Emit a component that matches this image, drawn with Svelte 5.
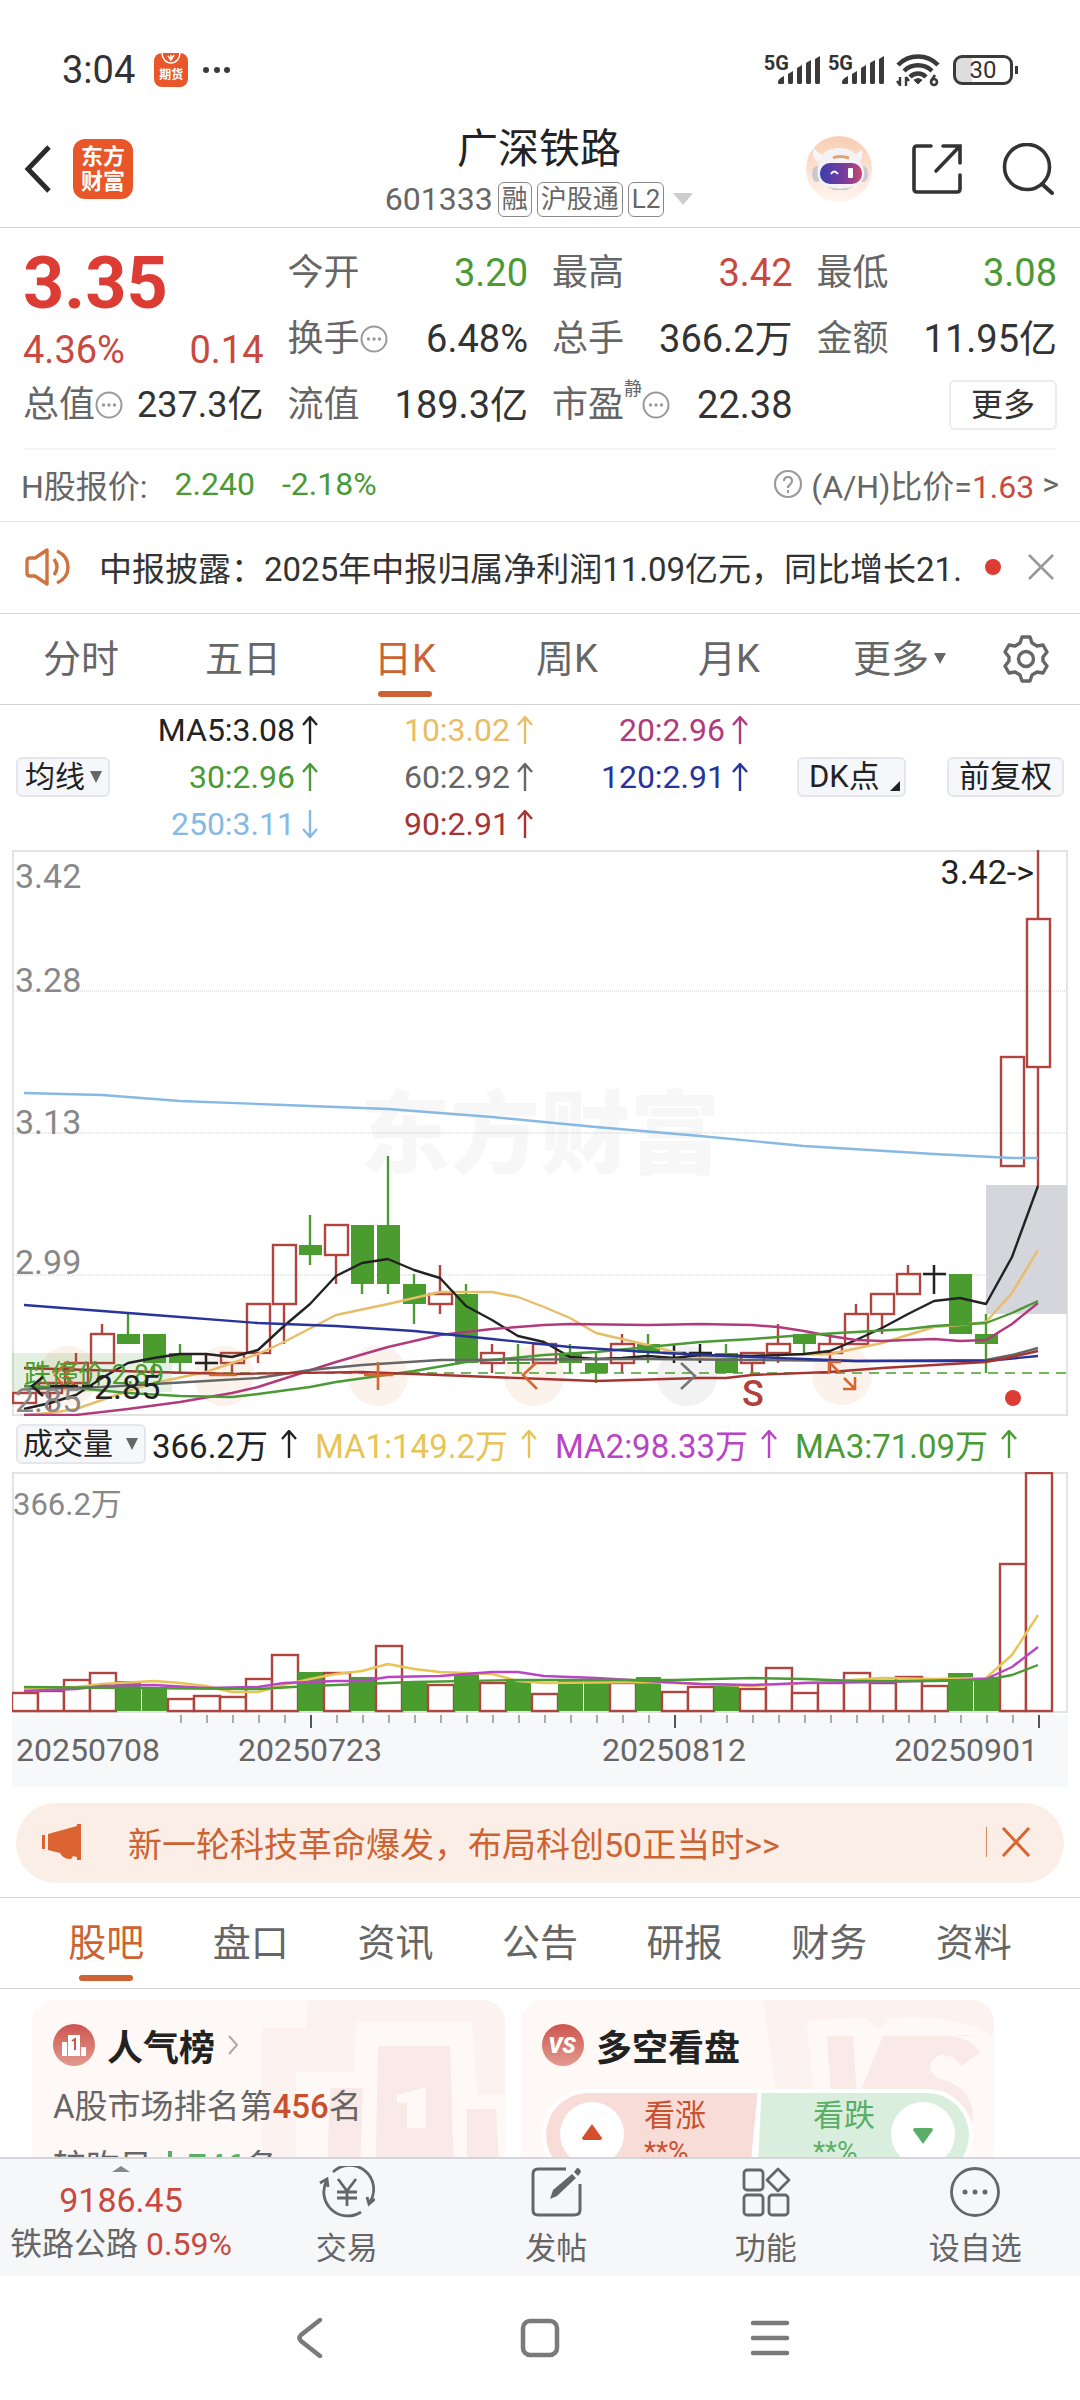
<script lang="ts">
  type Candle = [open: number, high: number, low: number, close: number];
  type Point = [index: number, y: number];

  const STEP = 26;
  const FIRST = 12;
  const TOP_PRICE = 3.42;
  const PX_PER_YUAN = 987;

  const x = (i: number) => FIRST + i * STEP;
  const y = (price: number) => Math.round((TOP_PRICE - price) * PX_PER_YUAN);
  const line = (points: Point[]) => points.map(([i, v]) => `${x(i)},${v}`).join(' ');

  const candles: Candle[] = [
    [2.86, 2.87, 2.86, 2.87], [2.87, 2.88, 2.85, 2.88], [2.88, 2.91, 2.88, 2.9], [2.9, 2.94, 2.9, 2.93],
    [2.93, 2.95, 2.92, 2.92], [2.93, 2.93, 2.89, 2.9], [2.91, 2.92, 2.89, 2.9], [2.9, 2.91, 2.89, 2.9],
    [2.9, 2.91, 2.89, 2.91], [2.91, 2.96, 2.9, 2.96], [2.96, 3.02, 2.92, 3.02], [3.02, 3.05, 3.0, 3.01],
    [3.01, 3.04, 2.98, 3.04], [3.04, 3.04, 2.97, 2.98], [3.04, 3.11, 2.97, 2.98], [2.98, 2.99, 2.94, 2.96],
    [2.96, 3.0, 2.95, 2.97], [2.97, 2.98, 2.9, 2.9], [2.9, 2.92, 2.89, 2.91], [2.901, 2.92, 2.89, 2.899],
    [2.9, 2.92, 2.9, 2.92], [2.91, 2.92, 2.89, 2.9], [2.9, 2.91, 2.88, 2.89], [2.9, 2.93, 2.89, 2.92],
    [2.92, 2.93, 2.9, 2.91], [2.91, 2.92, 2.9, 2.91], [2.91, 2.92, 2.9, 2.91], [2.91, 2.92, 2.89, 2.89],
    [2.9, 2.91, 2.89, 2.91], [2.91, 2.94, 2.9, 2.92], [2.93, 2.93, 2.91, 2.92], [2.91, 2.93, 2.89, 2.92],
    [2.92, 2.96, 2.92, 2.95], [2.95, 2.97, 2.93, 2.97], [2.97, 3.0, 2.97, 2.99], [2.99, 3.0, 2.97, 2.99],
    [2.99, 2.99, 2.93, 2.93], [2.93, 2.95, 2.89, 2.92], [3.1, 3.21, 3.1, 3.21], [3.2, 3.42, 3.08, 3.35],
  ];

  const averages: { color: string; points: Point[] }[] = [
    { color: '#86b9e4', points: [[0, 243], [3, 245], [6, 251], [10, 255], [14, 259], [18, 267], [20, 272], [22, 277], [26, 286], [30, 296], [35, 304], [38, 308], [39, 308]] },
    { color: '#e8bd68', points: [[0, 565], [1, 563], [2, 559], [3, 550], [4, 541], [5, 533], [7, 522], [9, 504], [10, 492], [12, 465], [14, 454], [16, 442], [18, 442], [19, 447], [20, 457], [21, 468], [22, 483], [23, 489], [24, 495], [25, 502], [26, 508], [27, 507], [29, 505], [31, 504], [33, 493], [35, 477], [36, 475], [37, 472], [38, 443], [39, 400]] },
    { color: '#222222', points: [[0, 559], [1, 553], [2, 545], [3, 528], [4, 513], [5, 508], [6, 504], [7, 504], [8, 507], [9, 500], [10, 476], [11, 454], [12, 426], [13, 413], [14, 409], [15, 420], [16, 428], [17, 456], [18, 470], [19, 486], [20, 492], [21, 507], [22, 509], [23, 508], [24, 506], [25, 508], [26, 505], [28, 506], [29, 505], [30, 504], [31, 501], [32, 490], [33, 478], [34, 464], [35, 451], [36, 448], [37, 454], [38, 407], [39, 336]] },
    { color: '#b13a7c', points: [[0, 565], [2, 565], [4, 559], [6, 552], [8, 543], [9, 537], [12, 512], [14, 497], [16, 485], [18, 479], [20, 475], [21, 474], [24, 475], [26, 474], [28, 475], [29, 477], [30, 481], [31, 486], [32, 490], [33, 491], [35, 489], [36, 491], [37, 490], [38, 474], [39, 453]] },
    { color: '#4a9a35', points: [[0, 536], [2, 538], [4, 543], [6, 546], [8, 547], [9, 544], [11, 537], [12, 532], [15, 521], [17, 512], [18, 510], [20, 505], [22, 502], [24, 497], [26, 492], [28, 489], [30, 485], [32, 482], [34, 479], [35, 476], [37, 473], [38, 463], [39, 451]] },
    { color: '#666666', points: [[0, 539], [3, 537], [7, 531], [9, 528], [11, 520], [13, 515], [16, 510], [24, 509], [28, 510], [32, 511], [37, 510], [38, 505], [39, 498]] },
    { color: '#28349b', points: [[0, 455], [2, 459], [5, 465], [9, 473], [12, 476], [15, 481], [18, 489], [21, 497], [24, 502], [27, 506], [30, 509], [32, 511], [37, 511], [39, 506]] },
    { color: '#a53433', points: [[0, 518], [5, 522], [8, 524], [13, 522], [16, 525], [20, 529], [22, 531], [26, 528], [27, 528], [28, 525], [31, 522], [33, 518], [35, 515], [37, 512], [38, 507], [39, 501]] },
  ];

  // negative numbers are falling days
  const volumes = [
    18, 20, 31, 38, -30, -24, 12, 15, 14, 32, 56, -39, 38, -34, 65, -29, 26, -37, 28, -32,
    17, -30, -30, 28, -34, 19, 24, -25, 22, 43, 18, 28, 38, 28, 34, 25, -38, -34, 147, 238,
  ];

  const volumeAverages: { color: string; points: Point[] }[] = [
    { color: '#e8c455', points: [[0, 217], [2, 215], [3, 212], [5, 209], [6, 211], [7, 214], [8, 220], [9, 220], [10, 213], [11, 207], [12, 202], [13, 199], [14, 192], [15, 197], [16, 200], [18, 202], [19, 209], [20, 211], [24, 210], [26, 212], [28, 214], [30, 211], [33, 206], [35, 207], [37, 206], [38, 183], [39, 143]] },
    { color: '#b944c6', points: [[0, 219], [2, 217], [3, 214], [5, 213], [7, 216], [9, 215], [10, 211], [12, 209], [13, 209], [14, 205], [16, 204], [17, 202], [18, 200], [19, 200], [20, 204], [22, 206], [24, 209], [26, 212], [28, 213], [30, 211], [33, 210], [36, 208], [37, 207], [38, 195], [39, 175]] },
    { color: '#4a9a35', points: [[0, 215], [4, 216], [9, 217], [11, 214], [13, 212], [15, 210], [19, 208], [25, 208], [28, 206], [30, 207], [32, 209], [35, 209], [37, 208], [38, 203], [39, 193]] },
  ];

  const gridLines = [141, 283, 425];
  const priceLabels = [
    { text: '3.42', y: 38 },
    { text: '3.28', y: 142 },
    { text: '3.13', y: 284 },
    { text: '2.99', y: 424 },
    { text: '2.85', y: 562 },
  ];
  const ticks = Array.from({ length: 34 }, (_, i) => i + 6);
  const majorTicks = [11, 25, 39];

  const quoteColumns = [
    [
      { label: '今开', value: '3.20', tone: 'down' },
      { label: '换手', value: '6.48%', info: true },
      { label: '流值', value: '189.3亿' },
    ],
    [
      { label: '最高', value: '3.42', tone: 'up' },
      { label: '总手', value: '366.2万' },
      { label: '市盈', sup: '静', value: '22.38', info: true },
    ],
    [
      { label: '最低', value: '3.08', tone: 'down' },
      { label: '金额', value: '11.95亿' },
    ],
  ];

  const maLegend = [
    { text: 'MA5:3.08', color: '#222222' },
    { text: '10:3.02', color: '#e8bd68' },
    { text: '20:2.96', color: '#b13a7c' },
    { text: '30:2.96', color: '#4a9a35' },
    { text: '60:2.92', color: '#666666' },
    { text: '120:2.91', color: '#28349b' },
    { text: '250:3.11', color: '#86b9e4', falling: true },
    { text: '90:2.91', color: '#a53433' },
  ];

  const volumeLegend = [
    { text: '366.2万', color: '#222222' },
    { text: 'MA1:149.2万', color: '#e8c455' },
    { text: 'MA2:98.33万', color: '#b944c6' },
    { text: 'MA3:71.09万', color: '#4a9a35' },
  ];

  const periods = ['分时', '五日', '日K', '周K', '月K', '更多'];
  const sections = ['股吧', '盘口', '资讯', '公告', '研报', '财务', '资料'];
  let period = $state('日K');
  let section = $state('股吧');
</script>

{#snippet arrow(falling = false)}
  <svg class="arrow" class:falling viewBox="0 0 16 28" aria-hidden="true">
    <path d="M8 28V2M1 9L8 1L15 9" fill="none" stroke="currentColor" stroke-width="2.4" />
  </svg>
{/snippet}

{#snippet info()}
  <svg class="info" viewBox="0 0 28 28" aria-hidden="true">
    <circle cx="14" cy="14" r="12.5" fill="none" stroke="#999" stroke-width="2" />
    <circle cx="8.5" cy="14" r="1.7" fill="#999" /><circle cx="14" cy="14" r="1.7" fill="#999" /><circle cx="19.5" cy="14" r="1.7" fill="#999" />
  </svg>
{/snippet}

{#snippet signal()}
  <span class="signal">
    <span>5G</span>
    <svg width="43" height="28" viewBox="0 0 43 28" aria-hidden="true">
      <path d="M0 26q0-3 6-6v7q0 1-1 1H1q-1 0-1-1zM10 18l5-3v12l-1 1h-3l-1-1zM19 12l5-3v18l-1 1h-3l-1-1zM28 7l5-3v23l-1 1h-3l-1-1zM37 3l5-3v27l-1 1h-3l-1-1z" />
    </svg>
  </span>
{/snippet}

<div class="app">
  <div class="status">
    <span class="clock">3:04</span>
    <span class="mini-logo"><svg width="20" height="12" viewBox="0 0 20 12"><path d="M1 0a9 10 0 0 0 18 0M7 3l3 4 3-5M10 7V2" fill="none" stroke="#fff" stroke-width="1.5" /></svg>期货</span>
    <svg width="28" height="8" viewBox="0 0 28 8"><circle cx="4" cy="4" r="3" /><circle cx="15" cy="4" r="3" /><circle cx="25" cy="4" r="3" /></svg>
    <span class="spacer"></span>
    {@render signal()}
    {@render signal()}
    <svg class="wifi" width="44" height="34" viewBox="0 0 44 34">
      <g fill="none" stroke="#3a3a3a" stroke-width="4.5">
        <path d="M2 12a28 28 0 0 1 40 0" /><path d="M8 18a20 20 0 0 1 28 0" /><path d="M14 24a11 11 0 0 1 16 0" />
        <path d="M22 31l-4-4q4-3 8 0z" fill="#3a3a3a" stroke-width="1" />
        <path d="M4 33V24M10 24v9M1 28l3 4M13 28l-3-4" stroke-width="2.4" />
        <path d="M39 22l-4 6" stroke-width="2.6" /><circle cx="38" cy="29" r="3" stroke-width="2.6" />
      </g>
    </svg>
    <span class="battery">30</span>
  </div>

  <header>
    <div class="side">
      <button class="plain" aria-label="返回">
        <svg width="28" height="48" viewBox="0 0 28 48"><path d="M25 2L4 24L25 46" fill="none" stroke="#2b2b2b" stroke-width="5" /></svg>
      </button>
      <a class="logo" href="#home">东方<br />财富</a>
    </div>
    <div class="title">
      <h1>广深铁路</h1>
      <div class="code">601333 <span>融</span><span>沪股通</span><span>L2</span><i class="caret"></i></div>
    </div>
    <div class="side tools">
      <button class="plain" aria-label="智能助手">
        <svg width="66" height="66" viewBox="0 0 66 66">
          <defs>
            <linearGradient id="halo" x2="0" y2="1"><stop stop-color="#f8cdb2" /><stop offset="1" stop-color="#fff5f0" /></linearGradient>
            <linearGradient id="visor"><stop stop-color="#3c3fae" /><stop offset="0.6" stop-color="#7a3c9c" /><stop offset="1" stop-color="#c8486f" /></linearGradient>
          </defs>
          <circle cx="33" cy="33" r="33" fill="url(#halo)" />
          <path d="M8 12q-4 9 4 14l8-6q-8-2-12-8zM55 13q4 8-3 14l-9-5q9-3 12-9z" fill="#f8f5f7" />
          <ellipse cx="11" cy="38" rx="5" ry="8" fill="#c9c7d2" /><ellipse cx="57" cy="38" rx="5" ry="8" fill="#c9c7d2" />
          <path d="M13 27Q16 12 33 12T55 27Q62 38 54 48Q46 54 34 54T15 48Q9 38 13 27z" fill="#f4f2f6" />
          <path d="M20 50q14 6 28 0l-8 4h-12z" fill="#c4c2cc" />
          <rect x="14" y="27" width="42" height="21" rx="10" fill="url(#visor)" />
          <path d="M25 38q3-5 7 0" fill="none" stroke="#fff" stroke-width="2" />
          <rect x="42" y="32" width="5" height="10" rx="1" fill="#fff" />
          <path d="M27 22q6-3 16 0" fill="none" stroke="#dda36d" stroke-width="3" />
        </svg>
      </button>
      <button class="plain" aria-label="分享">
        <svg width="50" height="50" viewBox="0 0 50 50"><path d="M19 2H5Q2 2 2 5V45Q2 48 5 48H45Q48 48 48 45V31M31 2H48V19M47 3L24 27" fill="none" stroke="#333" stroke-width="3.6" stroke-linecap="round" /></svg>
      </button>
      <button class="plain" aria-label="搜索">
        <svg width="52" height="52" viewBox="0 0 52 52"><circle cx="25" cy="24" r="22.5" fill="none" stroke="#333" stroke-width="3.6" /><path d="M40 41L50 50" stroke="#333" stroke-width="4" stroke-linecap="round" /></svg>
      </button>
    </div>
  </header>

  <section class="quote">
    <div>
      <div class="price up">3.35</div>
      <div class="change up"><span>4.36%</span><span>0.14</span></div>
      <div class="cell total"><span class="label">总值</span>{@render info()}<b>237.3亿</b></div>
    </div>
    {#each quoteColumns as column, i}
      <div>
        {#each column as cell}
          <div class="cell">
            <span class="label">{cell.label}</span>
            {#if cell.sup}<sup>{cell.sup}</sup>{/if}
            {#if cell.info}{@render info()}{/if}
            <b class={cell.tone}>{cell.value}</b>
          </div>
        {/each}
        {#if i === 2}
          <div class="cell end"><button class="more">更多</button></div>
        {/if}
      </div>
    {/each}
  </section>

  <a class="h-share" href="#h-share">
    <span>H股报价:</span>
    <span class="down">2.240</span>
    <span class="down">-2.18%</span>
    <span class="spacer"></span>
    <svg width="30" height="30" viewBox="0 0 30 30"><circle cx="15" cy="15" r="13" fill="none" stroke="#999" stroke-width="2.2" /><path d="M11 12q0-4 4-4t4 4q0 2-2 3.500t-2 3.500M15 21v3" fill="none" stroke="#999" stroke-width="2.2" /></svg>
    <span class="ratio">(A/H)比价=<em class="up">1.63</em></span>
    <span>&gt;</span>
  </a>

  <div class="news">
    <svg width="46" height="40" viewBox="0 0 46 40"><g fill="none" stroke="#cf7440" stroke-width="3.4" stroke-linejoin="round"><path d="M22 3L10 11H5q-3 0-3 3V26q0 3 3 3h5L22 37z" /><path d="M29 12q6 8 0 16M32 4q11 5 11 16T32 36" /></g></svg>
    <a href="#news">中报披露：2025年中报归属净利润11.09亿元，同比增长21.</a>
    <i class="dot"></i>
    <button class="plain" aria-label="关闭公告">
      <svg width="26" height="26" viewBox="0 0 26 26"><path d="M1 1L25 25M25 1L1 25" stroke="#999" stroke-width="2.6" /></svg>
    </button>
  </div>

  <nav class="periods">
    {#each periods as name}
      <button class:active={period === name} onclick={() => (period = name)}>{name}{#if name === '更多'}<i class="tab-caret"></i>{/if}</button>
    {/each}
    <button class="gear" aria-label="图表设置">
      <svg width="46" height="48" viewBox="0 0 46 48"><path d="M19 2h8l2 6 5 3 6-1 4 7-4 5v4l4 5-4 7-6-1-5 3-2 6h-8l-2-6-5-3-6 1-4-7 4-5v-4l-4-5 4-7 6 1 5-3z" fill="none" stroke="#666" stroke-width="3.4" stroke-linejoin="round" /><circle cx="23" cy="24" r="7.500" fill="none" stroke="#666" stroke-width="3.4" /></svg>
    </button>
  </nav>

  <div class="indicators">
    <label class="pick">
      <select aria-label="主图指标"><option>均线</option></select><i></i>
    </label>
    <div class="ma-legend">
      {#each maLegend as item}
        <span style="color: {item.color}">{item.text}{@render arrow(item.falling)}</span>
      {/each}
    </div>
    <button class="chip dk">DK点</button>
    <button class="chip">前复权</button>
  </div>

  <div class="chart">
    <svg viewBox="0 0 1056 566" role="img" aria-label="日K线">
      <text x="528" y="316" text-anchor="middle" class="watermark">东方财富</text>
      {#each gridLines as gy}
        <line x1="0" x2="1056" y1={gy} y2={gy} stroke="#ccc" stroke-dasharray="1 1" />
      {/each}
      <rect x="1" y="1" width="1054" height="564" fill="none" stroke="#e3e3e3" stroke-width="2" />
      <g fill="#fcf2ec">
        <circle cx="56" cy="526" r="30" /><circle cx="212" cy="526" r="30" /><circle cx="366" cy="526" r="30" />
        <circle cx="522" cy="526" r="30" /><circle cx="675" cy="526" r="30" fill="#f2f2f2" /><circle cx="830" cy="525" r="30" />
      </g>
      <rect x="0" y="503" width="160" height="39" fill="#4a9a35" opacity="0.15" />
      <rect x="974" y="335" width="81" height="129" fill="#d5d6dc" />

      {#each candles as [open, high, low, close], i}
        {#if close > open}
          <g fill="none" stroke="#b04540" stroke-width="2.4">
            <path d="M{x(i)} {y(high)}V{y(close)}M{x(i)} {y(open)}V{y(low)}" />
            <rect x={x(i) - 11} y={y(close)} width="23" height={y(open) - y(close)} />
          </g>
        {:else if close < open}
          <path d="M{x(i)} {y(high)}V{y(low)}" stroke="#4a9c2e" stroke-width="2.4" />
          <rect x={x(i) - 11} y={y(open)} width="23" height={y(close) - y(open)} fill="#4a9c2e" />
        {:else}
          <path d="M{x(i)} {y(high)}V{y(low)}M{x(i) - 11} {y(close)}h23" stroke="#222" stroke-width="2.5" />
        {/if}
      {/each}

      <line x1="160" x2="1056" y1="523" y2="523" stroke="#4a9c2e" stroke-width="1.4" stroke-dasharray="10 7" />
      {#each averages as average}
        <polyline points={line(average.points)} fill="none" stroke={average.color} stroke-width="2.4" stroke-linejoin="round" />
      {/each}

      <g fill="none" stroke="#d9662f" stroke-width="2.6">
        <path d="M54 512L43 525L54 539M65 512L54 525L65 539" />
        <path d="M197 525h28M352 525h29M366 512v28" />
        <path d="M525 512L511 525L525 539" />
        <path d="M817 524V512H829M817 512L828 523M843 527V539H831M843 539L832 528" />
        <path d="M669 513L683 526L669 539" stroke="#777" />
      </g>

      {#each priceLabels as label}
        <text x="3" y={label.y} class="price-label">{label.text}</text>
      {/each}
      <text x="12" y="534" class="limit">跌停价:2.89</text>
      <path d="M31 527L20 536L31 546M38 536h28M70 536h11" fill="none" stroke="#222" stroke-width="2.6" />
      <text x="82" y="549" class="mark">2.85</text>
      <text x="1022" y="34" text-anchor="end" class="mark">3.42-&gt;</text>
      <text x="730" y="556" class="sell">S</text>
      <circle cx="1001" cy="548" r="8" fill="#dc3c33" />
    </svg>

    <div class="volume-legend">
      <label class="pick wide">
        <select aria-label="副图指标"><option>成交量</option></select><i></i>
      </label>
      {#each volumeLegend as item}
        <span style="color: {item.color}">{item.text}{@render arrow()}</span>
      {/each}
    </div>

    <svg viewBox="0 0 1056 241" role="img" aria-label="成交量">
      <rect x="1" y="1" width="1054" height="239" fill="none" stroke="#e3e3e3" stroke-width="2" />
      <text x="1" y="43" class="volume-label">366.2万</text>
      {#each volumes as v, i}
        {#if v > 0}
          <rect x={x(i) - 12} y={239 - v} width="26" height={v} fill="#fff" stroke="#b04540" stroke-width="2.4" />
        {:else}
          <rect x={x(i) - 12} y={239 + v} width="25" height={-v} fill="#4a9c2e" />
        {/if}
      {/each}
      {#each volumeAverages as average}
        <polyline points={line(average.points)} fill="none" stroke={average.color} stroke-width="2.4" stroke-linejoin="round" />
      {/each}
    </svg>

    <svg class="axis" viewBox="0 0 1056 72" aria-label="日期">
      {#each ticks as i}
        <line x1={x(i) + 1} x2={x(i) + 1} y1="0" y2={majorTicks.includes(i) ? 13 : 8} stroke={majorTicks.includes(i) ? '#555' : '#aaa'} stroke-width="2" />
      {/each}
      <text x="4" y="46">20250708</text>
      <text x={x(11)} y="46" text-anchor="middle">20250723</text>
      <text x={x(25)} y="46" text-anchor="middle">20250812</text>
      <text x={x(39)} y="46" text-anchor="end">20250901</text>
    </svg>
  </div>

  <div class="banner">
    <svg width="42" height="36" viewBox="0 0 42 36"><path d="M1 11h3v14H1zM7 10L36 2V0h4V36h-4v-3L32 32l-2 3q-8 0-11-6L7 26z" fill="#db6430" /></svg>
    <a href="#promo">新一轮科技革命爆发，布局科创50正当时&gt;&gt;</a>
    <button class="plain" aria-label="关闭广告">
      <svg width="30" height="30" viewBox="0 0 30 30"><path d="M2 1L28 29M28 1L2 29" stroke="#d9662f" stroke-width="3" /></svg>
    </button>
  </div>

  <nav class="sections">
    {#each sections as name}
      <button class:active={section === name} onclick={() => (section = name)}>{name}</button>
    {/each}
  </nav>

  <main class="feed">
    <article>
      <svg class="backdrop" viewBox="0 0 243 200" aria-hidden="true">
        <path d="M46 0H243V200H0V28H44z" fill="#fcf3f1" />
        <path d="M94 22H210L215 95H243V200H34V72H92z" fill="#fef9f7" />
        <path d="M116 46h72l5 154h-80zM68 88h33l-4 112H64zM205 109h29l5 91h-34z" fill="#f9eae8" />
        <path d="M164 87v41h-19v-26l-10 1v-8z" fill="#fef9f7" />
      </svg>
      <h2>
        <svg width="42" height="42" viewBox="0 0 42 42">
          <defs><linearGradient id="badge" x2="0" y2="1"><stop stop-color="#cc554e" /><stop offset="1" stop-color="#e39a90" /></linearGradient></defs>
          <circle cx="21" cy="21" r="21" fill="url(#badge)" /><path d="M9 18h5v14H9zM15 11h12v21H15zM28 23h5v9h-5z" fill="#fff" /><path d="M19 17l3-2v11" fill="none" stroke="#cc554e" stroke-width="2" />
        </svg>
        人气榜
        <svg width="12" height="20" viewBox="0 0 12 20"><path d="M2 1L10 10L2 19" fill="none" stroke="#aaa" stroke-width="2" /></svg>
      </h2>
      <p>A股市场排名第<strong class="rank">456</strong>名</p>
      <p>较昨日<strong class="drop"><svg viewBox="0 0 16 28" aria-hidden="true"><path d="M8 1V26M2 18L8 26L14 18" fill="none" stroke="currentColor" stroke-width="4" /></svg>746 </strong>名</p>
    </article>
    <article>
      <svg class="backdrop" viewBox="0 0 243 200" aria-hidden="true">
        <path d="M12 0H243V200H40z" fill="#fcf3f1" />
        <path d="M56 20L115 18L127 30L140 18Q215 14 243 38V200H72z" fill="#fef9f7" />
        <path d="M76 36h26l4 64 26-64h94q-46-6-51 28-3 26 24 34l-32 50H84z" fill="#f9eae8" />
        <path d="M170 44q14-10 30-8 18 2 29 16l-18 14q-12-14-24-10-16 10 0 22 40 10 34 48l-54-6-16-40z" fill="#f9eae8" />
      </svg>
      <h2>
        <svg width="42" height="42" viewBox="0 0 42 42"><circle cx="21" cy="21" r="21" fill="url(#badge)" /><text x="20" y="29" text-anchor="middle" class="vs">VS</text></svg>
        多空看盘
      </h2>
      <div class="vote">
        <button class="bull"><svg width="64" height="64" viewBox="0 0 64 64"><circle cx="32" cy="32" r="32" fill="#fff" /><path d="M32 22L42 36Q42 38 40 38H24Q22 38 22 36z" fill="#d5502a" /></svg><span>看涨<small>**%</small></span></button>
        <button class="bear"><span>看跌<small>**%</small></span><svg width="64" height="64" viewBox="0 0 64 64"><circle cx="32" cy="32" r="32" fill="#fff" /><path d="M32 42L22 28Q22 26 24 26H40Q42 26 42 28z" fill="#5bae68" /></svg></button>
      </div>
    </article>
  </main>

  <footer>
    <a class="index" href="#index">
      <i></i>
      <span class="up">9186.45</span>
      <span>铁路公路 <em class="up">0.59%</em></span>
    </a>
    <a href="#trade">
      <svg viewBox="0 0 56 52"><g fill="none" stroke="#666" stroke-width="2.8"><path d="M14 6A24 24 0 0 1 51 36M42 46A24 24 0 0 1 8 14M1 17l7-4 1 8M56 33l-6 5-2-7" /><path d="M19 13l9 12 9-12M18 26h20M18 32h20M28 25v15" /></g></svg>
      交易
    </a>
    <a href="#post">
      <svg viewBox="0 0 56 52"><path d="M38 3H10q-5 0-5 5V44q0 5 5 5H46q6 0 6-5V18" fill="none" stroke="#666" stroke-width="3" /><path d="M22 33l3-9L44 8l4 4L29 30zM46 6l3-4q3 0 4 4l-3 4z" fill="#666" /></svg>
      发帖
    </a>
    <a href="#features">
      <svg viewBox="0 0 56 52"><g fill="none" stroke="#666" stroke-width="2.8"><rect x="6" y="4" width="19" height="20" rx="3" /><rect x="6" y="29" width="19" height="20" rx="3" /><rect x="31" y="29" width="19" height="20" rx="3" /><path d="M40 3L51 14L40 25L29 14z" stroke-linejoin="round" /></g></svg>
      功能
    </a>
    <a href="#watch">
      <svg viewBox="0 0 56 52"><circle cx="28" cy="26" r="23.500" fill="none" stroke="#666" stroke-width="2.8" /><circle cx="18" cy="26" r="2.500" fill="#666" /><circle cx="28" cy="26" r="2.500" fill="#666" /><circle cx="38" cy="26" r="2.500" fill="#666" /></svg>
      设自选
    </a>
  </footer>

  <div class="system-nav">
    <button class="plain" aria-label="后退"><svg width="40" height="40" viewBox="0 0 40 40"><path d="M30 2L11 17Q8 20 11 23L30 38" fill="none" stroke="#7a7a7a" stroke-width="4.500" stroke-linecap="round" /></svg></button>
    <button class="plain" aria-label="主屏幕"><svg width="40" height="40" viewBox="0 0 40 40"><rect x="3" y="3" width="34" height="34" rx="7" fill="none" stroke="#7a7a7a" stroke-width="4.500" /></svg></button>
    <button class="plain" aria-label="最近任务"><svg width="40" height="40" viewBox="0 0 40 40"><path d="M3 5H37M3 20H37M3 35H37" stroke="#7a7a7a" stroke-width="4.500" stroke-linecap="round" /></svg></button>
  </div>
</div>

<style>
  :global(body) {
    margin: 0;
    background: #fff;
  }

  .app {
    --up: #c94840;
    --down: #4a9a35;
    --accent: #cd6332;
    display: flex;
    flex-direction: column;
    height: 100vh;
    font-family: Roboto, "Noto Sans CJK SC", sans-serif;
    font-size: 32px;
    color: #666;
    overflow: hidden;
  }

  .app > * {
    flex: none;
  }

  .app :global(*) {
    box-sizing: border-box;
  }

  svg {
    display: block;
    flex: none;
  }

  button,
  select {
    font: inherit;
    color: inherit;
    border: 0;
    padding: 0;
    background: none;
    cursor: pointer;
  }

  a {
    color: inherit;
    text-decoration: none;
  }

  em {
    font-style: normal;
  }

  .plain {
    display: flex;
  }

  .spacer {
    flex: 1;
  }

  .up {
    color: var(--up);
  }

  .down {
    color: var(--down);
  }

  /* status bar */
  .status {
    display: flex;
    align-items: center;
    height: 120px;
    padding: 20px 67px 0 62px;
    color: #333;
    fill: #3a3a3a;
  }

  .clock {
    font-size: 38px;
    margin-right: 19px;
  }

  .mini-logo {
    display: flex;
    flex-direction: column;
    align-items: center;
    width: 34px;
    height: 34px;
    margin-right: 14px;
    border-radius: 8px;
    background: #e8562a;
    color: #fff;
    font-size: 12px;
    line-height: 20px;
    font-weight: 700;
  }

  .signal {
    display: flex;
    align-items: flex-end;
    margin-right: 7px;
  }

  .signal span {
    align-self: flex-start;
    margin-right: -11px;
    font-size: 20px;
    font-weight: 700;
    line-height: 14px;
  }

  .wifi {
    margin: 0 13px 0 4px;
  }

  .battery {
    position: relative;
    width: 60px;
    height: 30px;
    border: 3px solid #3a3a3a;
    border-radius: 9px;
    background: linear-gradient(90deg, #ddd 30%, #fff 30%);
    font-size: 24px;
    line-height: 24px;
    text-align: center;
  }

  .battery::after {
    content: "";
    position: absolute;
    right: -8px;
    top: 8px;
    width: 3px;
    height: 8px;
    background: #3a3a3a;
  }

  /* header */
  header {
    display: grid;
    grid-template-columns: 1fr auto 1fr;
    padding: 4px 26px 3px 24px;
    border-bottom: 1px solid #d4d4d4;
  }

  .side {
    display: flex;
    align-items: center;
    gap: 21px;
    height: 90px;
  }

  .tools {
    justify-content: flex-end;
    gap: 40px;
  }

  .logo {
    width: 60px;
    height: 60px;
    padding-top: 5px;
    border-radius: 12px;
    background: #e8562a;
    color: #fff;
    font-size: 22px;
    font-weight: 700;
    line-height: 25px;
    text-align: center;
  }

  .title {
    text-align: center;
  }

  h1 {
    margin: 0;
    font-size: 41px;
    font-weight: 400;
    line-height: 50px;
    color: #222;
  }

  .code {
    display: flex;
    align-items: center;
    gap: 5px;
    height: 50px;
  }

  .code span {
    height: 35px;
    padding: 0 3px;
    border: 1px solid #888;
    border-radius: 6px;
    font-size: 26px;
    line-height: 32px;
  }

  .caret {
    margin-left: 4px;
    border: 10px solid transparent;
    border-top: 12px solid #ccc;
    border-bottom: 0;
  }

  /* quote */
  .quote {
    display: grid;
    grid-template-columns: repeat(4, 1fr);
    gap: 24px;
    margin: 0 23px;
    padding: 12px 0 10px;
    border-bottom: 2px solid #f5f5f5;
    font-size: 36px;
  }

  .price {
    font-size: 72px;
    font-weight: 700;
    line-height: 88px;
    color: #dc3c33;
  }

  .change {
    display: flex;
    justify-content: space-between;
    font-size: 38px;
    line-height: 44px;
  }

  .cell {
    display: flex;
    align-items: center;
    height: 66px;
    line-height: 66px;
    white-space: nowrap;
  }

  .cell b {
    margin-left: auto;
    font-size: 38px;
    font-weight: 400;
  }

  .total b {
    font-size: 36px;
  }

  .cell b:not(.up):not(.down) {
    color: #333;
  }

  .cell sup {
    align-self: flex-start;
    font-size: 18px;
    line-height: 34px;
  }

  .info {
    width: 28px;
    height: 28px;
  }

  .end {
    justify-content: flex-end;
  }

  .more {
    width: 108px;
    height: 50px;
    border: 2px solid #ececec;
    border-radius: 6px;
    font-size: 32px;
    line-height: 44px;
    color: #333;
  }

  .h-share {
    display: flex;
    align-items: center;
    height: 72px;
    padding: 0 21px 4px;
    border-bottom: 1px solid #e8e8e8;
  }

  .h-share .down {
    margin-left: 27px;
  }

  .ratio {
    margin: 0 8px;
  }

  .news {
    display: flex;
    align-items: center;
    height: 92px;
    padding: 0 26px 2px 25px;
    border-bottom: 1px solid #d8d8d8;
    font-size: 33px;
    color: #333;
  }

  .news a {
    flex: 1;
    margin-left: 28px;
    overflow: hidden;
    white-space: nowrap;
  }

  .dot {
    width: 16px;
    height: 16px;
    margin: 0 27px 0 8px;
    border-radius: 50%;
    background: #dc3c33;
  }

  /* tabs */
  .periods,
  .sections {
    display: flex;
    height: 91px;
    border-bottom: 1px solid #d4d4d4;
    font-size: 38px;
  }

  .periods button,
  .sections button {
    position: relative;
    flex: 3;
    line-height: 90px;
  }

  .periods .gear {
    display: flex;
    flex: 2;
    align-items: center;
    justify-content: center;
  }

  button.active {
    color: var(--accent);
  }

  button.active::after {
    content: "";
    position: absolute;
    left: 50%;
    bottom: 7px;
    width: 54px;
    height: 6px;
    border-radius: 3px;
    background: var(--accent);
    transform: translateX(-50%);
  }

  .tab-caret {
    position: absolute;
    top: 39px;
    margin-left: 5px;
    border: 6px solid transparent;
    border-top: 11px solid #666;
    border-bottom: 0;
  }

  /* indicators */
  .indicators {
    display: flex;
    align-items: center;
    padding: 1px 16px 3px;
  }

  .pick {
    position: relative;
    display: flex;
  }

  .pick select {
    width: 94px;
    height: 40px;
    padding-left: 7px;
    border: 2px solid #e4e6ec;
    border-radius: 6px;
    background: #f6f7fa;
    appearance: none;
    font-size: 30px;
    line-height: 36px;
    color: #222;
  }

  .pick i {
    position: absolute;
    right: 8px;
    top: 14px;
    border: 6px solid transparent;
    border-top: 12px solid #666;
    border-bottom: 0;
    pointer-events: none;
  }

  .pick.wide select {
    width: 130px;
    padding-left: 5px;
  }

  .ma-legend {
    display: grid;
    grid-template-columns: 208px 215px 215px;
    grid-auto-rows: 47px;
  }

  .ma-legend span {
    display: flex;
    align-items: center;
    justify-content: flex-end;
    gap: 7px;
  }

  .arrow {
    width: 16px;
    height: 28px;
  }

  .falling {
    transform: rotate(180deg);
  }

  .chip {
    position: relative;
    height: 40px;
    margin-left: auto;
    padding: 0 10px;
    border: 2px solid #e4e6ec;
    border-radius: 6px;
    background: #f6f7fa;
    font-size: 31px;
    line-height: 34px;
    color: #222;
  }

  .dk {
    margin-left: 49px;
    padding-right: 24px;
  }

  .dk::after {
    content: "";
    position: absolute;
    right: 4px;
    bottom: 4px;
    border-left: 10px solid transparent;
    border-bottom: 10px solid #222;
  }

  /* charts */
  .chart {
    margin: 0 12px;
  }

  .chart > svg {
    width: 100%;
    height: auto;
  }

  .watermark {
    font-size: 90px;
    font-weight: 900;
    fill: #f7f7f7;
  }

  .price-label {
    font-size: 34px;
    fill: #888;
  }

  .volume-label {
    font-size: 31px;
    fill: #888;
  }

  .limit {
    font-size: 27px;
    fill: #4a9c2e;
  }

  .mark {
    font-size: 34px;
    fill: #222;
  }

  .sell {
    font-size: 36px;
    font-weight: 500;
    fill: #b0403a;
  }

  .volume-legend {
    display: flex;
    align-items: center;
    gap: 18px;
    height: 56px;
    padding-left: 4px;
    font-size: 33px;
    white-space: nowrap;
  }

  .volume-legend .pick {
    margin-right: -12px;
  }

  .volume-legend span {
    display: flex;
    align-items: center;
    gap: 13px;
  }

  .axis {
    margin-top: 2px;
    background: #f7f8fa;
    font-size: 32px;
    fill: #666;
  }

  /* banner */
  .banner {
    display: flex;
    align-items: center;
    height: 80px;
    margin: 16px 16px 14px;
    padding: 0 33px 2px 25px;
    border-radius: 40px;
    background: #fbeee6;
    color: var(--accent);
    font-size: 34px;
  }

  .banner a {
    flex: 1;
    margin-left: 45px;
  }

  .banner button {
    padding-left: 14px;
    border-left: 1px solid #d98a62;
  }

  .sections {
    height: 92px;
    padding: 0 34px;
    border-top: 1px solid #d4d4d4;
  }

  /* feed */
  .app > .feed {
    display: grid;
    flex: 1 1 0;
    grid-template-columns: 1fr 1fr;
    gap: 16px;
    min-height: 0;
    padding: 11px 86px 0 32px;
    overflow: hidden;
  }

  article {
    position: relative;
    height: 220px;
    padding: 15px 21px;
    border-radius: 22px;
    background: #fef8f6;
    overflow: hidden;
  }

  .backdrop {
    position: absolute;
    right: 0;
    top: 0;
    width: 243px;
  }

  h2 {
    position: relative;
    display: flex;
    align-items: center;
    gap: 12px;
    height: 60px;
    margin: 0;
    font-size: 36px;
    font-weight: 700;
    color: #222;
  }

  article p {
    position: relative;
    margin: 0;
    padding-top: 4px;
    font-size: 33px;
    line-height: 56px;
    white-space: pre;
  }

  article p strong {
    font-weight: 500;
  }

  .rank {
    color: #c9502d;
  }

  .drop {
    color: #5bae68;
  }

  .drop svg {
    display: inline-block;
    width: 16px;
    height: 28px;
    margin: 0 10px;
  }

  .vs {
    font-size: 22px;
    font-weight: 900;
    font-style: italic;
    fill: #fff;
  }

  .vote {
    position: relative;
    display: flex;
    height: 92px;
    margin: 14px 0 0;
    border: 4px solid #fff;
    border-radius: 46px;
    background: #fff;
    overflow: hidden;
  }

  .vote button {
    display: flex;
    flex: 1;
    align-items: center;
    justify-content: space-between;
    padding: 0 14px 2px;
    font-size: 31px;
    line-height: 36px;
  }

  .vote span {
    display: flex;
    flex-direction: column;
    width: 78px;
    text-align: left;
  }

  .vote small {
    font-size: 28px;
    line-height: 36px;
  }

  .vote .bull {
    justify-content: flex-start;
    gap: 20px;
    background: #f8dcd8;
    color: #c9502d;
    clip-path: polygon(0 0, 100% 0, calc(100% - 8px) 100%, 0 100%);
  }

  .vote .bear {
    justify-content: flex-end;
    background: #daeedd;
    color: #5bae68;
    clip-path: polygon(4px 0, 100% 0, 100% 100%, 0 100%);
  }

  /* bottom bars */
  footer {
    display: grid;
    grid-template-columns: 242px repeat(4, 1fr);
    height: 119px;
    border-top: 2px solid #d4d6dc;
    background: #f6f7f9;
    font-size: 31px;
  }

  footer a {
    display: flex;
    flex-direction: column;
    align-items: center;
    gap: 9px;
    padding-top: 7px;
    line-height: 44px;
    white-space: nowrap;
  }

  footer a svg {
    width: 56px;
    height: 52px;
  }

  footer .index {
    gap: 0;
    font-size: 32px;
  }

  .index i {
    border: 9px solid transparent;
    border-bottom: 6px solid #888;
    border-top: 0;
    margin-bottom: 6px;
  }

  .index .up {
    font-size: 34px;
  }

  .index em.up {
    font-size: 32px;
  }

  .system-nav {
    display: grid;
    grid-template-columns: repeat(3, 1fr);
    justify-items: center;
    align-items: center;
    height: 124px;
    padding: 0 18%;
  }
</style>
